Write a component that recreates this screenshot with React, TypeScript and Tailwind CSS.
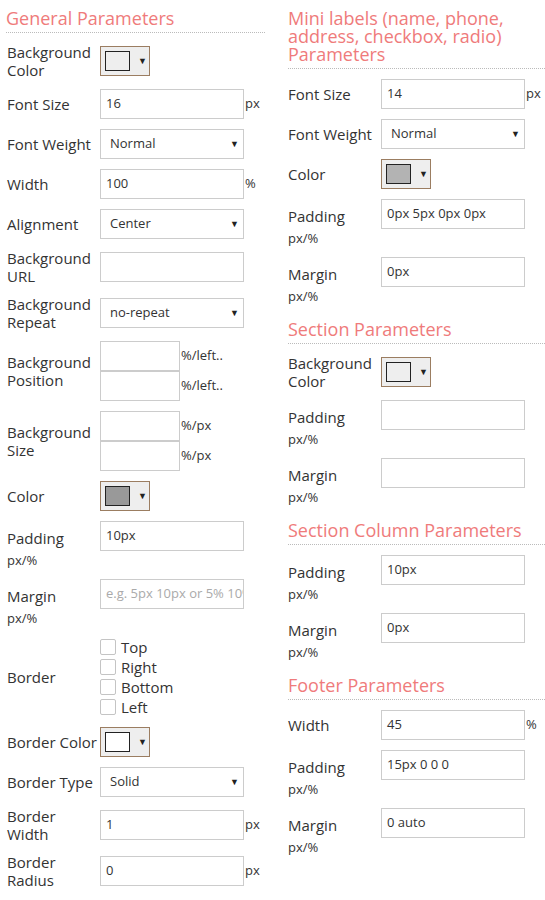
import React, { ReactNode } from 'react';

const font = "font-['Open_Sans','Liberation_Sans',sans-serif]";

const Heading = ({ children }: { children: ReactNode }) => (
  <div className="text-[18px] leading-[18px] text-[#ef7b7b] pb-[5px] border-b border-dotted border-[#bbb] mb-[10px]">
    {children}
  </div>
);

const Label = ({ children }: { children: ReactNode }) => (
  <div className="w-[93px] shrink-0 text-[15px] leading-[18px] text-[#333]">{children}</div>
);

const Suffix = ({ children }: { children?: ReactNode }) => (
  <span className="text-[13px] text-[#333] ml-[1px]">{children}</span>
);

const TextInput = ({ value, placeholder, wide = true }: { value?: string; placeholder?: string; wide?: boolean }) => (
  <div
    className={`${wide ? 'w-[144px]' : 'w-[80px]'} h-[30px] border border-[#ccc] bg-white px-[5px] flex items-center text-[13px] text-[#333] whitespace-nowrap overflow-hidden`}
  >
    {value ? value : <span className="text-[#aaa]">{placeholder}</span>}
  </div>
);

const Select = ({ value }: { value: string }) => (
  <div className="w-[144px] h-[30px] border border-[#ccc] bg-white pl-[9px] pr-[4px] flex items-center justify-between text-[13px] text-[#333]">
    <span>{value}</span>
    <span className="text-[9px] text-[#222]">▼</span>
  </div>
);

const Swatch = ({ color }: { color: string }) => (
  <div className="w-[50px] h-[30px] border border-[#9b7d61] bg-[#eee] flex items-center pl-[4px] gap-[8px]">
    <div className="w-[25px] h-[20px] border border-[#222]" style={{ backgroundColor: color }} />
    <span className="text-[9px] text-[#222]">▼</span>
  </div>
);

const Row = ({ label, children }: { label: ReactNode; children: ReactNode }) => (
  <div className="flex items-center mb-[10px]">
    <Label>{label}</Label>
    <div className="flex items-center">{children}</div>
  </div>
);

const UnitRow = ({ label, value, placeholder }: { label: string; value?: string; placeholder?: string }) => (
  <div className="flex items-start mb-[11px]">
    <div className="w-[93px] shrink-0 text-[#333]">
      <div className="pt-[8px] text-[15px] leading-[18px]">{label}</div>
      <div className="mt-[5px] text-[13px] leading-[16px]">px/%</div>
    </div>
    <TextInput value={value} placeholder={placeholder} />
  </div>
);

const PairRow = ({ label, unit }: { label: ReactNode; unit: string }) => (
  <Row label={label}>
    <div className="flex flex-col">
      {[0, 1].map((i) => (
        <div key={i} className="flex items-center">
          <TextInput wide={false} />
          <Suffix>{unit}</Suffix>
        </div>
      ))}
    </div>
  </Row>
);

const Check = ({ text }: { text: string }) => (
  <div className="flex items-center h-[20px]">
    <div className="w-[16px] h-[16px] border border-[#c4c4c4] rounded-[2px] bg-white" />
    <span className="ml-[5px] text-[15px] text-[#333]">{text}</span>
  </div>
);

const Section = ({ title, children }: { title: ReactNode; children: ReactNode }) => (
  <div className="mb-[16px]">
    <Heading>{title}</Heading>
    {children}
  </div>
);

export default function App() {
  return (
    <div className={`${font} w-[545px] bg-white flex gap-[23px] pl-[6px] pt-[9px]`}>
      <div className="w-[259px]">
        <Section title="General Parameters">
          <div className="pl-[1px]">
            <Row label={<>Background<br />Color</>}>
              <Swatch color="#eeeeee" />
            </Row>
            <Row label="Font Size">
              <TextInput value="16" />
              <Suffix>px</Suffix>
            </Row>
            <Row label="Font Weight">
              <Select value="Normal" />
            </Row>
            <Row label="Width">
              <TextInput value="100" />
              <Suffix>%</Suffix>
            </Row>
            <Row label="Alignment">
              <Select value="Center" />
            </Row>
            <Row label={<>Background<br />URL</>}>
              <TextInput />
            </Row>
            <Row label={<>Background<br />Repeat</>}>
              <Select value="no-repeat" />
            </Row>
            <PairRow label={<>Background<br />Position</>} unit="%/left.." />
            <PairRow label={<>Background<br />Size</>} unit="%/px" />
            <Row label="Color">
              <Swatch color="#999999" />
            </Row>
            <UnitRow label="Padding" value="10px" />
            <UnitRow label="Margin" placeholder="e.g. 5px 10px or 5% 10%" />
            <Row label="Border">
              <div className="flex flex-col">
                <Check text="Top" />
                <Check text="Right" />
                <Check text="Bottom" />
                <Check text="Left" />
              </div>
            </Row>
            <Row label="Border Color">
              <Swatch color="#ffffff" />
            </Row>
            <Row label="Border Type">
              <Select value="Solid" />
            </Row>
            <Row label={<>Border<br />Width</>}>
              <TextInput value="1" />
              <Suffix>px</Suffix>
            </Row>
            <Row label={<>Border<br />Radius</>}>
              <TextInput value="0" />
              <Suffix>px</Suffix>
            </Row>
          </div>
        </Section>
      </div>

      <div className="flex-1">
        <Section title={<>Mini labels (name, phone,<br />address, checkbox, radio)<br />Parameters</>}>
          <Row label="Font Size">
            <TextInput value="14" />
            <Suffix>px</Suffix>
          </Row>
          <Row label="Font Weight">
            <Select value="Normal" />
          </Row>
          <Row label="Color">
            <Swatch color="#b3b3b3" />
          </Row>
          <UnitRow label="Padding" value="0px 5px 0px 0px" />
          <UnitRow label="Margin" value="0px" />
        </Section>
        <Section title="Section Parameters">
          <Row label={<>Background<br />Color</>}>
            <Swatch color="#eeeeee" />
          </Row>
          <UnitRow label="Padding" />
          <UnitRow label="Margin" />
        </Section>
        <Section title="Section Column Parameters">
          <UnitRow label="Padding" value="10px" />
          <UnitRow label="Margin" value="0px" />
        </Section>
        <Section title="Footer Parameters">
          <Row label="Width">
            <TextInput value="45" />
            <Suffix>%</Suffix>
          </Row>
          <UnitRow label="Padding" value="15px 0 0 0" />
          <UnitRow label="Margin" value="0 auto" />
        </Section>
      </div>
    </div>
  );
}
